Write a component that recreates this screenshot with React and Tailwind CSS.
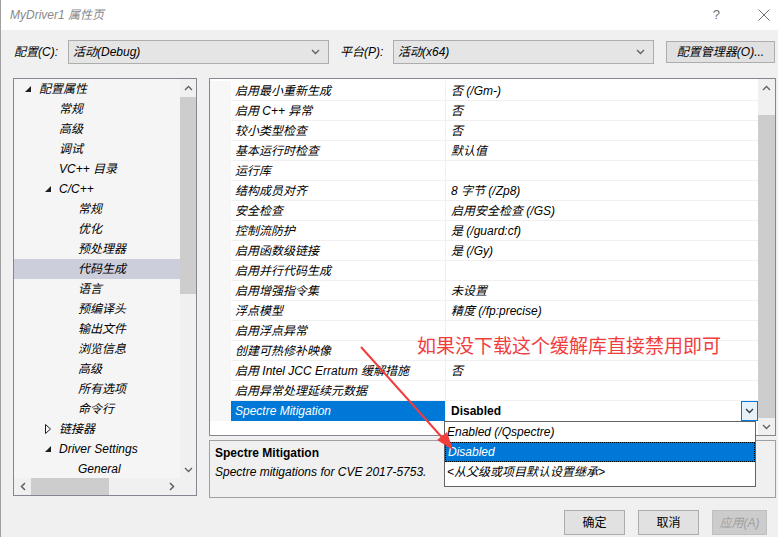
import React from "react";

const FONT = { fontFamily: '"Liberation Sans", "Noto Sans CJK SC", sans-serif' };

const treeItems = [
  { label: "配置属性", level: 0, toggle: "open" },
  { label: "常规", level: 1 },
  { label: "高级", level: 1 },
  { label: "调试", level: 1 },
  { label: "VC++ 目录", level: 1 },
  { label: "C/C++", level: 1, toggle: "open" },
  { label: "常规", level: 2 },
  { label: "优化", level: 2 },
  { label: "预处理器", level: 2 },
  { label: "代码生成", level: 2, selected: true },
  { label: "语言", level: 2 },
  { label: "预编译头", level: 2 },
  { label: "输出文件", level: 2 },
  { label: "浏览信息", level: 2 },
  { label: "高级", level: 2 },
  { label: "所有选项", level: 2 },
  { label: "命令行", level: 2 },
  { label: "链接器", level: 1, toggle: "closed" },
  { label: "Driver Settings", level: 1, toggle: "open" },
  { label: "General", level: 2 },
];

const indent = ["pl-[11px]", "pl-[31px]", "pl-[50px]"];

const props = [
  ["启用最小重新生成", "否 (/Gm-)"],
  ["启用 C++ 异常", "否"],
  ["较小类型检查", "否"],
  ["基本运行时检查", "默认值"],
  ["运行库", ""],
  ["结构成员对齐", "8 字节 (/Zp8)"],
  ["安全检查", "启用安全检查 (/GS)"],
  ["控制流防护", "是 (/guard:cf)"],
  ["启用函数级链接", "是 (/Gy)"],
  ["启用并行代码生成", ""],
  ["启用增强指令集", "未设置"],
  ["浮点模型", "精度 (/fp:precise)"],
  ["启用浮点异常", ""],
  ["创建可热修补映像", ""],
  ["启用 Intel JCC Erratum 缓解措施", "否"],
  ["启用异常处理延续元数据", ""],
];

const Chevron = ({ dir = "down", className = "" }) => (
  <svg width="9" height="6" viewBox="0 0 9 6" className={className}>
    {dir === "down" && <polyline points="1,1 4.5,4.5 8,1" fill="none" stroke="currentColor" strokeWidth="1.3" />}
    {dir === "up" && <polyline points="1,5 4.5,1.5 8,5" fill="none" stroke="currentColor" strokeWidth="1.3" />}
  </svg>
);

const SideChevron = ({ dir }) => (
  <svg width="6" height="9" viewBox="0 0 6 9">
    {dir === "left" ? (
      <polyline points="5,1 1.5,4.5 5,8" fill="none" stroke="#606060" strokeWidth="1.5" />
    ) : (
      <polyline points="1,1 4.5,4.5 1,8" fill="none" stroke="#606060" strokeWidth="1.5" />
    )}
  </svg>
);

const Toggle = ({ type }) => {
  if (type === "open")
    return (
      <svg width="6" height="6" viewBox="0 0 6 6">
        <path d="M6 0 L6 6 L0 6 Z" fill="#1e1e1e" />
      </svg>
    );
  if (type === "closed")
    return (
      <svg width="6" height="10" viewBox="0 0 6 10">
        <path d="M0.5 0.5 L5.5 5 L0.5 9.5 Z" fill="none" stroke="#1e1e1e" strokeWidth="1" />
      </svg>
    );
  return null;
};

const Combo = ({ value, width }) => (
  <div className={`${width} h-[24px] flex items-center justify-between bg-[#e5e5e5] border border-[#adadad] pl-[4px] pr-[8px]`}>
    <span className="italic text-[12px] text-black">{value}</span>
    <Chevron className="text-[#606060]" />
  </div>
);

export default function App() {
  return (
    <div className="relative w-[778px] h-[537px] overflow-hidden bg-[#f0f0f0] border-l border-[#a0a0a0] text-[12px] text-black" style={FONT}>
      {/* title bar */}
      <div className="h-[30px] bg-white flex items-center justify-between pl-[9px] pr-[8px]">
        <span className="italic text-[12px] text-[#8a8a8a]">MyDriver1 属性页</span>
        <div className="flex items-center gap-[38px]">
          <span className="text-[13px] text-[#707070]">?</span>
          <svg width="12" height="12" viewBox="0 0 12 12">
            <path d="M0.5 0.5 L11.5 11.5 M11.5 0.5 L0.5 11.5" stroke="#707070" strokeWidth="1" />
          </svg>
        </div>
      </div>

      {/* config row */}
      <div className="flex items-center mt-[10px] pl-[13px]">
        <span className="italic w-[54px]">配置(C):</span>
        <Combo value="活动(Debug)" width="w-[261px]" />
        <span className="italic ml-[11px] w-[53px]">平台(P):</span>
        <Combo value="活动(x64)" width="w-[261px]" />
        <div className="ml-[12px] w-[109px] h-[22px] flex items-center justify-center bg-[#e1e1e1] border border-[#adadad] italic">
          配置管理器(O)...
        </div>
      </div>

      {/* main */}
      <div className="flex mt-[14px] pl-[12px]">
        {/* tree */}
        <div className="w-[184px] h-[418px] border border-[#828790] bg-[#f5f5f5] flex flex-col">
          <div className="flex h-[399px]">
            <div className="flex-1 overflow-hidden">
              {treeItems.map((it, i) => (
                <div
                  key={i}
                  className={`h-[20px] flex items-center italic ${indent[it.level]} ${it.selected ? "bg-[#cccedb]" : ""}`}
                >
                  <div className="w-[14px] flex items-center">
                    <Toggle type={it.toggle} />
                  </div>
                  <span className="whitespace-nowrap">{it.label}</span>
                </div>
              ))}
            </div>
            <div className="w-[16px] bg-[#f0f0f0] flex flex-col items-center">
              <div className="h-[17px] flex items-center justify-center text-[#606060]">
                <Chevron dir="up" />
              </div>
              <div className="w-[16px] h-[197px] mt-[1px] bg-[#cdcdcd]" />
              <div className="flex-1" />
              <div className="h-[17px] flex items-center justify-center text-[#606060]">
                <Chevron dir="down" />
              </div>
            </div>
          </div>
          <div className="flex h-[17px] bg-[#f0f0f0]">
            <div className="flex-1 flex items-center">
              <div className="w-[17px] flex justify-center">
                <SideChevron dir="left" />
              </div>
              <div className="w-[78px] h-[17px] bg-[#cdcdcd]" />
              <div className="flex-1" />
              <div className="w-[17px] flex justify-center">
                <SideChevron dir="right" />
              </div>
            </div>
            <div className="w-[16px]" />
          </div>
        </div>

        {/* right column */}
        <div className="ml-[12px] w-[567px] flex flex-col">
          <div className="h-[358px] border border-[#828790] bg-white flex">
            <div className="flex-1 flex flex-col pt-[2px]">
              {props.map(([name, value], i) => (
                <div key={i} className="flex h-[20px]">
                  <div className="w-[21px] bg-[#f7f7f7]" />
                  <div className="w-[214px] flex items-center pl-[4px] italic border-b border-[#f0f0f0] whitespace-nowrap">{name}</div>
                  <div className="flex-1 flex items-center pl-[5px] italic border-l border-b border-[#f0f0f0]">{value}</div>
                </div>
              ))}
              <div className="flex h-[20px]">
                <div className="w-[21px] bg-[#f7f7f7]" />
                <div className="w-[214px] flex items-center pl-[4px] italic text-white bg-[#0078d7]">Spectre Mitigation</div>
                <div className="flex-1 flex items-center justify-between pl-[5px] border-l border-[#f0f0f0]">
                  <span className="font-bold">Disabled</span>
                  <div className="w-[17px] h-[20px] border border-[#0078d7] bg-[#e5f1fb] flex items-center justify-center text-[#333]">
                    <Chevron />
                  </div>
                </div>
              </div>
              <div className="flex-1" />
            </div>
            <div className="w-[17px] bg-[#f0f0f0] flex flex-col items-center">
              <div className="h-[17px] flex items-center justify-center text-[#606060]">
                <Chevron dir="up" />
              </div>
              <div className="w-[17px] h-[303px] mt-[19px] bg-[#cdcdcd]" />
              <div className="flex-1" />
              <div className="h-[17px] flex items-center justify-center text-[#606060]">
                <Chevron dir="down" />
              </div>
            </div>
          </div>

          <div className="mt-[4px] h-[58px] border border-[#a0a0a0] bg-[#f0f0f0] pl-[5px] pt-[3px]">
            <div className="font-bold leading-[18px]">Spectre Mitigation</div>
            <div className="italic leading-[18px] mt-[1px]">Spectre mitigations for CVE 2017-5753.</div>
          </div>
        </div>
      </div>

      {/* buttons */}
      <div className="flex justify-end gap-[13px] mt-[12px] pr-[11px]">
        <div className="w-[61px] h-[25px] flex items-center justify-center bg-[#e1e1e1] border border-[#adadad]">确定</div>
        <div className="w-[61px] h-[25px] flex items-center justify-center bg-[#e1e1e1] border border-[#adadad]">取消</div>
        <div className="w-[55px] h-[25px] flex items-center justify-center bg-[#cccccc] border border-[#bfbfbf] italic text-[#a0a0a0]">应用(A)</div>
      </div>

      {/* dropdown list */}
      <div className="absolute left-[443px] top-[421px] w-[312px] h-[66px] bg-white border border-[#646464] flex flex-col">
        <div className="h-[20px] flex items-center pl-[2px] italic">Enabled (/Qspectre)</div>
        <div className="h-[20px] flex items-center pl-[2px] italic text-white bg-[#0078d7] border border-dotted border-black">Disabled</div>
        <div className="h-[20px] flex items-center pl-[2px] italic">&lt;从父级或项目默认设置继承&gt;</div>
      </div>

      {/* annotation */}
      <div
        className="absolute left-[416px] top-[332px] text-[19px] leading-[26px] text-[#f23d3d] whitespace-nowrap"
        style={{ fontFamily: '"Noto Sans CJK SC", sans-serif' }}
      >
        如果没下载这个缓解库直接禁用即可
      </div>
      <svg className="absolute left-0 top-0 pointer-events-none" width="778" height="537">
        <line x1="360" y1="347" x2="446" y2="443" stroke="#f23d3d" strokeWidth="2" />
        <path d="M452 450 L436 440 L446 432 Z" fill="#f23d3d" />
      </svg>
    </div>
  );
}
